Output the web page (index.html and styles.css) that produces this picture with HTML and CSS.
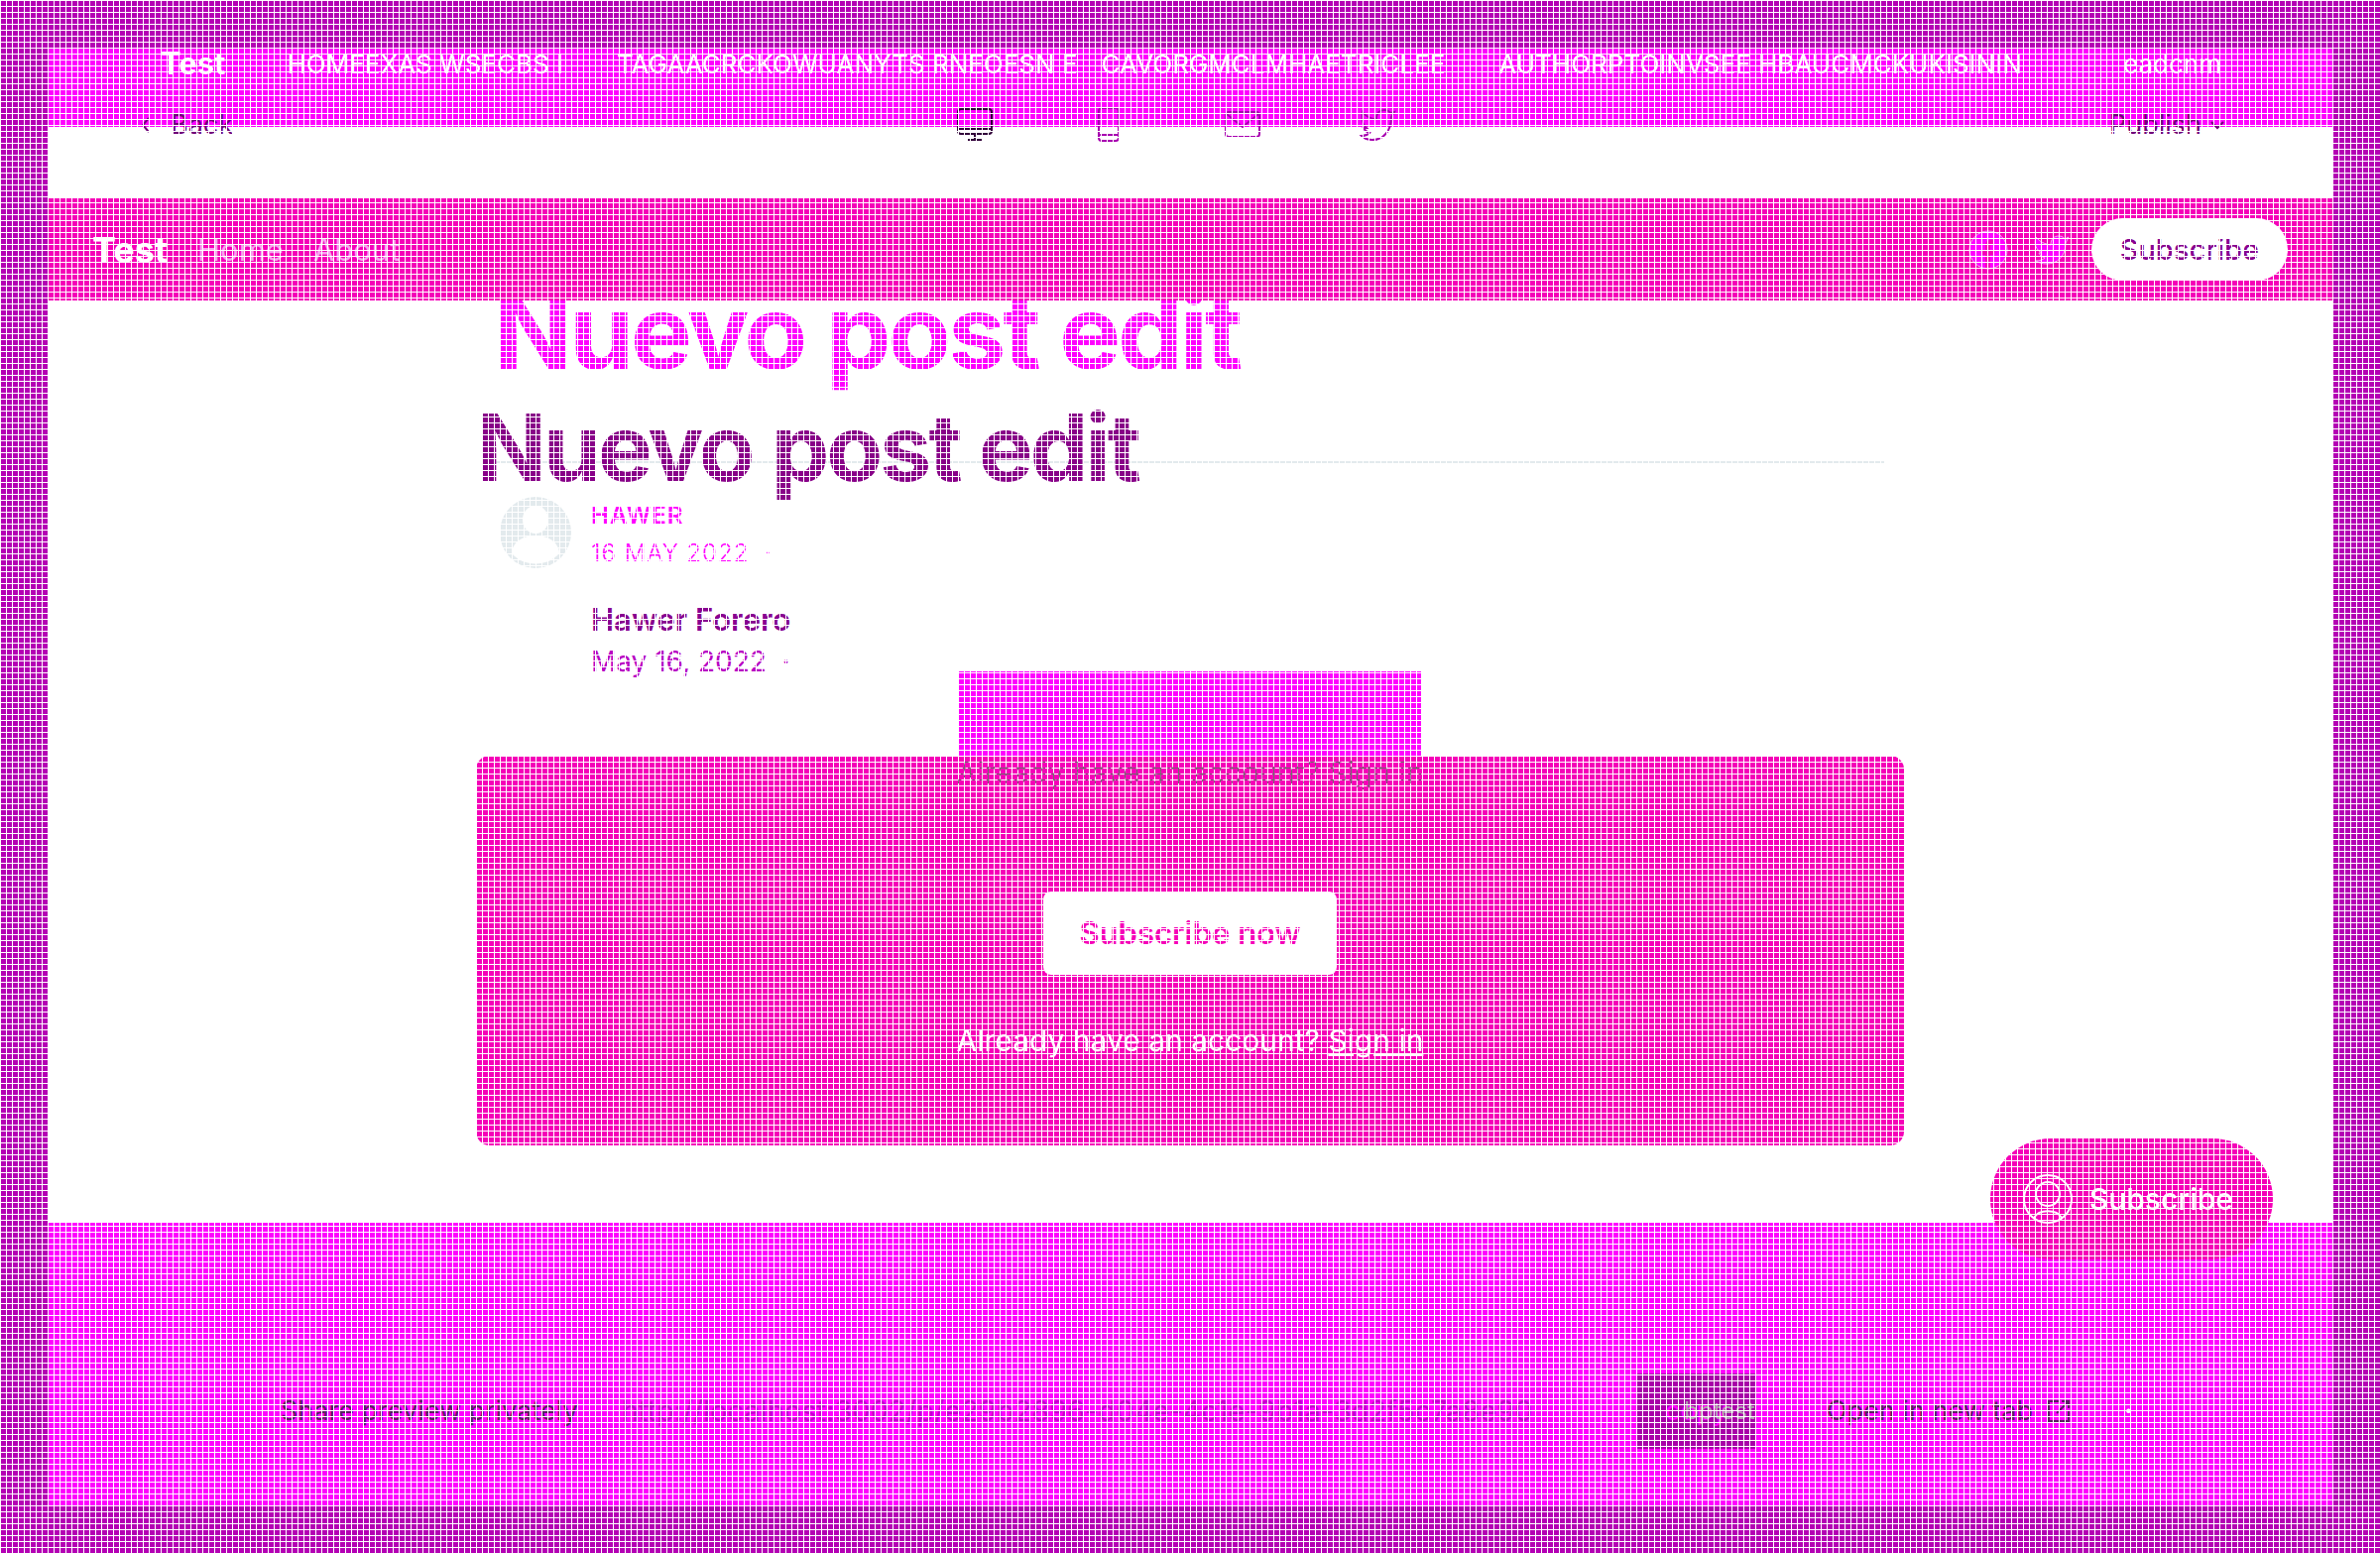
FILE: index.html
```html
<!DOCTYPE html>
<html lang="en">
<head>
<meta charset="utf-8">
<title>Nuevo post edit</title>
<link rel="stylesheet" href="styles.css">
</head>
<body>
<div class="page">
  <nav class="topbar">
    <a class="brand" href="#">Test</a>
    <a class="toplink first" href="#">HOMEEXAS WSECBS I</a>
    <a class="toplink second" href="#">TAGAACRCKOWUANYTS RNEOESN E</a>
    <a class="toplink third" href="#">CAVORGMCLMHAETRICLEE</a>
    <a class="toplink fourth" href="#">AUTHORPTOINVSEE HBAUCMCKUKISININ</a>
    <a class="toplink last" href="#">eadcnm</a>
  </nav>
  <div class="toolbar">
    <button class="tool back" type="button"><svg width="10" height="18" viewBox="0 0 10 18"><path d="M8 2L2 9l6 7"/></svg>Back</button>
    <div class="devices">
      <button class="tool dark" type="button" aria-label="Desktop"><svg width="40" height="36" viewBox="0 0 40 36"><rect x="3" y="2" width="34" height="25" rx="3"/><path d="M3 22h34M20 27v6M13 33h14"/></svg></button>
      <button class="tool" type="button" aria-label="Mobile"><svg width="40" height="36" viewBox="0 0 40 36"><rect x="10" y="1" width="20" height="33" rx="3"/><path d="M10 28h20"/></svg></button>
      <button class="tool" type="button" aria-label="Email"><svg width="40" height="36" viewBox="0 0 40 36"><rect x="3" y="5" width="34" height="25" rx="3"/><path d="M4 7l16 13L36 7"/></svg></button>
      <button class="tool" type="button" aria-label="Social"><svg width="40" height="36" viewBox="0 0 40 36"><path d="M6 5c4 5 9 7 14 7 0-6 3-9 8-9 3 0 5 1 6 3l4-1-3 5c0 14-8 23-19 23-5 0-8-1-11-4 4 0 6-1 8-3-4-1-5-3-6-5h3C6 18 5 11 6 5z"/></svg></button>
    </div>
    <button class="tool publish" type="button">Publish<svg width="16" height="10" viewBox="0 0 16 10"><path d="M2 2l6 6 6-6"/></svg></button>
  </div>
  <header class="sitebar">
    <a class="sitebrand" href="#">Test</a>
    <a class="sitelink" href="#">Home</a>
    <a class="sitelink" href="#">About</a>
    <div class="siteend">
      <a class="social" href="#" aria-label="Facebook"><svg width="40" height="40" viewBox="0 0 40 40"><circle cx="20" cy="20" r="19"/><path class="glyph" d="M17 38V25h-4v-5h4v-4c0-5 3-7 9-6v4c-4 0-4 1-4 6h5l-1 5h-4v13"/></svg></a>
      <a class="social" href="#" aria-label="Twitter"><svg width="36" height="32" viewBox="0 0 36 32"><path d="M2 3c4 5 9 7 15 8 0-6 3-9 8-9 3 0 5 1 6 3l4-2-3 6c0 14-9 21-19 21-5 0-8-1-11-3 4 0 7-1 9-3-4-1-5-3-6-5h3C2 16 0 10 2 3z"/></svg></a>
      <button class="pill" type="button">Subscribe</button>
    </div>
  </header>
  <main class="content">
    <h1 class="title large">Nuevo post edit</h1>
    <h2 class="title small">Nuevo post edit</h2>
    <div class="author">
      <svg class="avatar" width="72" height="72" viewBox="0 0 72 72"><circle cx="36" cy="36" r="36" fill="#e3eaed"/><ellipse cx="36" cy="23" rx="13" ry="14" fill="#fff"/><path d="M12 57c1-24 47-24 48 0-12 14-36 14-48 0z" fill="#fff"/></svg>
      <div class="meta">
        <span class="handle">HAWER</span>
        <span class="stamp">16 MAY 2022 &nbsp;·</span>
        <span class="name">Hawer Forero</span>
        <span class="date">May 16, 2022 &nbsp;·</span>
      </div>
    </div>
    <section class="card">
      <div class="tab"></div>
      <p class="ghost">Already have an account? <u>Sign in</u></p>
      <button class="subscribe" type="button">Subscribe now</button>
      <p class="signin">Already have an account? <a href="#">Sign in</a></p>
    </section>
  </main>
  <footer class="share">
    <button class="float" type="button"><svg width="52" height="52" viewBox="0 0 52 52"><circle cx="26" cy="26" r="24"/><circle cx="26" cy="21" r="12"/><path d="M12 45c5-9 23-9 28 0"/></svg>Subscribe</button>
    <label class="sharelabel" for="url">Share preview privately</label>
    <input class="url" id="url" readonly value="http://localhost:3002/p/e29b2896-d04e-4c1e-9b1a-3d2f5c7a8e90">
    <button class="copy" type="button">copy<span class="copyghost">bptest</span></button>
    <a class="open" href="#">Open in new tab<svg width="24" height="24" viewBox="0 0 24 24"><path d="M12 2H2v20h20V12M15 2h7v7M22 2L10 14"/></svg></a>
    <span class="spark">·</span>
  </footer>
</div>
</body>
</html>
```
FILE: styles.css
```css
* { box-sizing: border-box; }
body {
  margin: 0;
  font-family: Inter, "Liberation Sans", sans-serif;
  background: #b400b4;
}
/* white mesh drawn over the whole page */
body::after {
  content: "";
  position: fixed;
  inset: 0;
  z-index: 10;
  pointer-events: none;
  background:
    repeating-linear-gradient(to right, #fff 0 1px, transparent 1px 6px),
    repeating-linear-gradient(to bottom, #fff 0 1px, transparent 1px 6px);
}
a { color: inherit; text-decoration: none; }
button { font: inherit; border: 0; padding: 0; background: none; color: inherit; }
h1, h2, p { margin: 0; }
svg { display: block; fill: none; stroke: currentColor; stroke-width: 2; flex: none; }

.page {
  display: flex;
  flex-direction: column;
  min-height: 100vh;
  border: 48px solid #b400b4;
  background: #fff;
}
.topbar {
  display: flex;
  height: 80px;
  padding: 0 112px 0 114px;
  background: #f0f;
  color: #fff;
  line-height: 32px;
}
.brand { font-size: 31px; font-weight: 700; margin-right: 62px; }
.brand, .sitebrand, .signin { position: relative; z-index: 11; }
.toplink {
  font-size: 26px;
  font-weight: 400;
  line-height: 34px;
  white-space: nowrap;
}
.first { margin-right: 54px; }
.second { margin-right: 24px; }
.third { margin-right: 54px; }
.last { margin-left: auto; }

.toolbar {
  display: flex;
  align-items: center;
  justify-content: space-between;
  position: relative;
  margin-top: -24px;
  padding: 0 108px 52px 94px;
  font-size: 27px;
  line-height: 44px;
  color: #8a008a;
}
.tool { display: flex; align-items: center; color: #a800b0; }
.back, .publish { color: #700078; }
.dark { color: #300038; }
.back { gap: 20px; }
.publish { gap: 8px; }
.devices { display: flex; gap: 95px; margin-left: 8px; }

.sitebar {
  display: flex;
  align-items: center;
  position: relative;
  z-index: 2;
  height: 103px;
  padding: 0 45px;
  background: #f500b8;
  color: #fff;
  font-size: 31px;
}
.sitebrand { font-size: 36px; font-weight: 700; margin-right: 30px; }
.sitelink { margin-right: 30px; color: #f6a4ee; }
.siteend { display: flex; align-items: center; gap: 22px; margin-left: auto; }
.social svg { fill: #f0f; stroke: #f3b4ee; stroke-width: 1; }
.social:first-child { margin-right: 4px; }
.glyph { fill: #f500b8; stroke: none; }
.pill {
  padding: 0 29px;
  border-radius: 32px;
  line-height: 63px;
  font-size: 29px;
  font-weight: 500;
  background: #fff;
  color: #880090;
}

.content {
  width: 100%;
  max-width: 1440px;
  margin: 0 auto;
  padding-bottom: 78px;
}
.title { font-weight: 700; letter-spacing: -3px; }
.large { margin: -21px 0 0 18px; font-size: 104px; line-height: 104px; color: #f0f; }
.small {
  position: relative;
  z-index: 0;
  margin-top: 17px;
  font-size: 93px;
  line-height: 96px;
  color: #880088;
}
.small::before {
  content: "";
  position: absolute;
  z-index: -1;
  left: 20px;
  right: 20px;
  top: 62px;
  height: 2px;
  background: #e3eaed;
}
.author { display: flex; gap: 20px; padding: 2px 0 0 24px; }
.avatar { stroke: none; }
.meta { display: flex; flex-direction: column; font-size: 24px; color: #f0f; line-height: 38px; }
.handle { font-weight: 600; letter-spacing: 1px; }
.stamp { font-weight: 300; letter-spacing: 1px; }
.name { margin-top: 26px; font-size: 31px; font-weight: 600; line-height: 44px; color: #880090; }
.date { font-size: 28px; color: #b800c4; line-height: 40px; }

.card {
  display: flex;
  flex-direction: column;
  align-items: center;
  position: relative;
  margin-top: 75px;
  padding-bottom: 82px;
  border-radius: 14px;
  background: #f500b8;
  color: #fff;
  font-size: 30px;
  line-height: 48px;
}
.tab { position: absolute; bottom: 100%; width: 466px; height: 85px; background: #f0f; }
.ghost {
  position: relative;
  z-index: 11;
  margin-bottom: 103px;
  line-height: 34px;
  color: transparent;
  background:
    repeating-linear-gradient(to right, #6f6f6f 0 1px, transparent 1px 6px) fixed,
    repeating-linear-gradient(to bottom, #6f6f6f 0 1px, transparent 1px 6px) fixed;
  -webkit-background-clip: text;
  background-clip: text;
}
.subscribe {
  padding: 0 36px;
  margin-bottom: 42px;
  border-radius: 8px;
  background: #fff;
  color: #f500b8;
  font-size: 31px;
  font-weight: 600;
  line-height: 84px;
}
.signin a { text-decoration: underline; }

.share {
  display: flex;
  align-items: center;
  position: relative;
  flex: 1;
  padding: 94px 60px 0 235px;
  background: #f0f;
  color: #5a2060;
  font-size: 27px;
}
.float {
  display: flex;
  align-items: center;
  gap: 16px;
  position: absolute;
  z-index: 11;
  top: -85px;
  right: 60px;
  height: 122px;
  padding: 0 40px 0 32px;
  border-radius: 61px;
  background:
    repeating-linear-gradient(to right, #fff 0 1px, transparent 1px 6px) fixed,
    repeating-linear-gradient(to bottom, #fff 0 1px, transparent 1px 6px) fixed,
    #f500b8;
  color: #fff;
  font-size: 30px;
  font-weight: 500;
}
.sharelabel { margin-right: 44px; }
.url {
  flex: 1;
  min-width: 0;
  margin-right: 60px;
  padding: 0;
  border: 0;
  background: none;
  font: inherit;
  font-size: 29px;
  color: #c400cc;
}
.copy {
  position: relative;
  width: 119px;
  line-height: 76px;
  background: #a800a8;
  color: #f0f;
}
.copyghost { position: absolute; right: 0; top: 0; font-size: 24px; color: #b0a0b0; }
.open { display: flex; align-items: center; gap: 14px; margin: 0 54px 0 72px; }
.spark { color: #fff; width: 150px; font-weight: 700; }
```
